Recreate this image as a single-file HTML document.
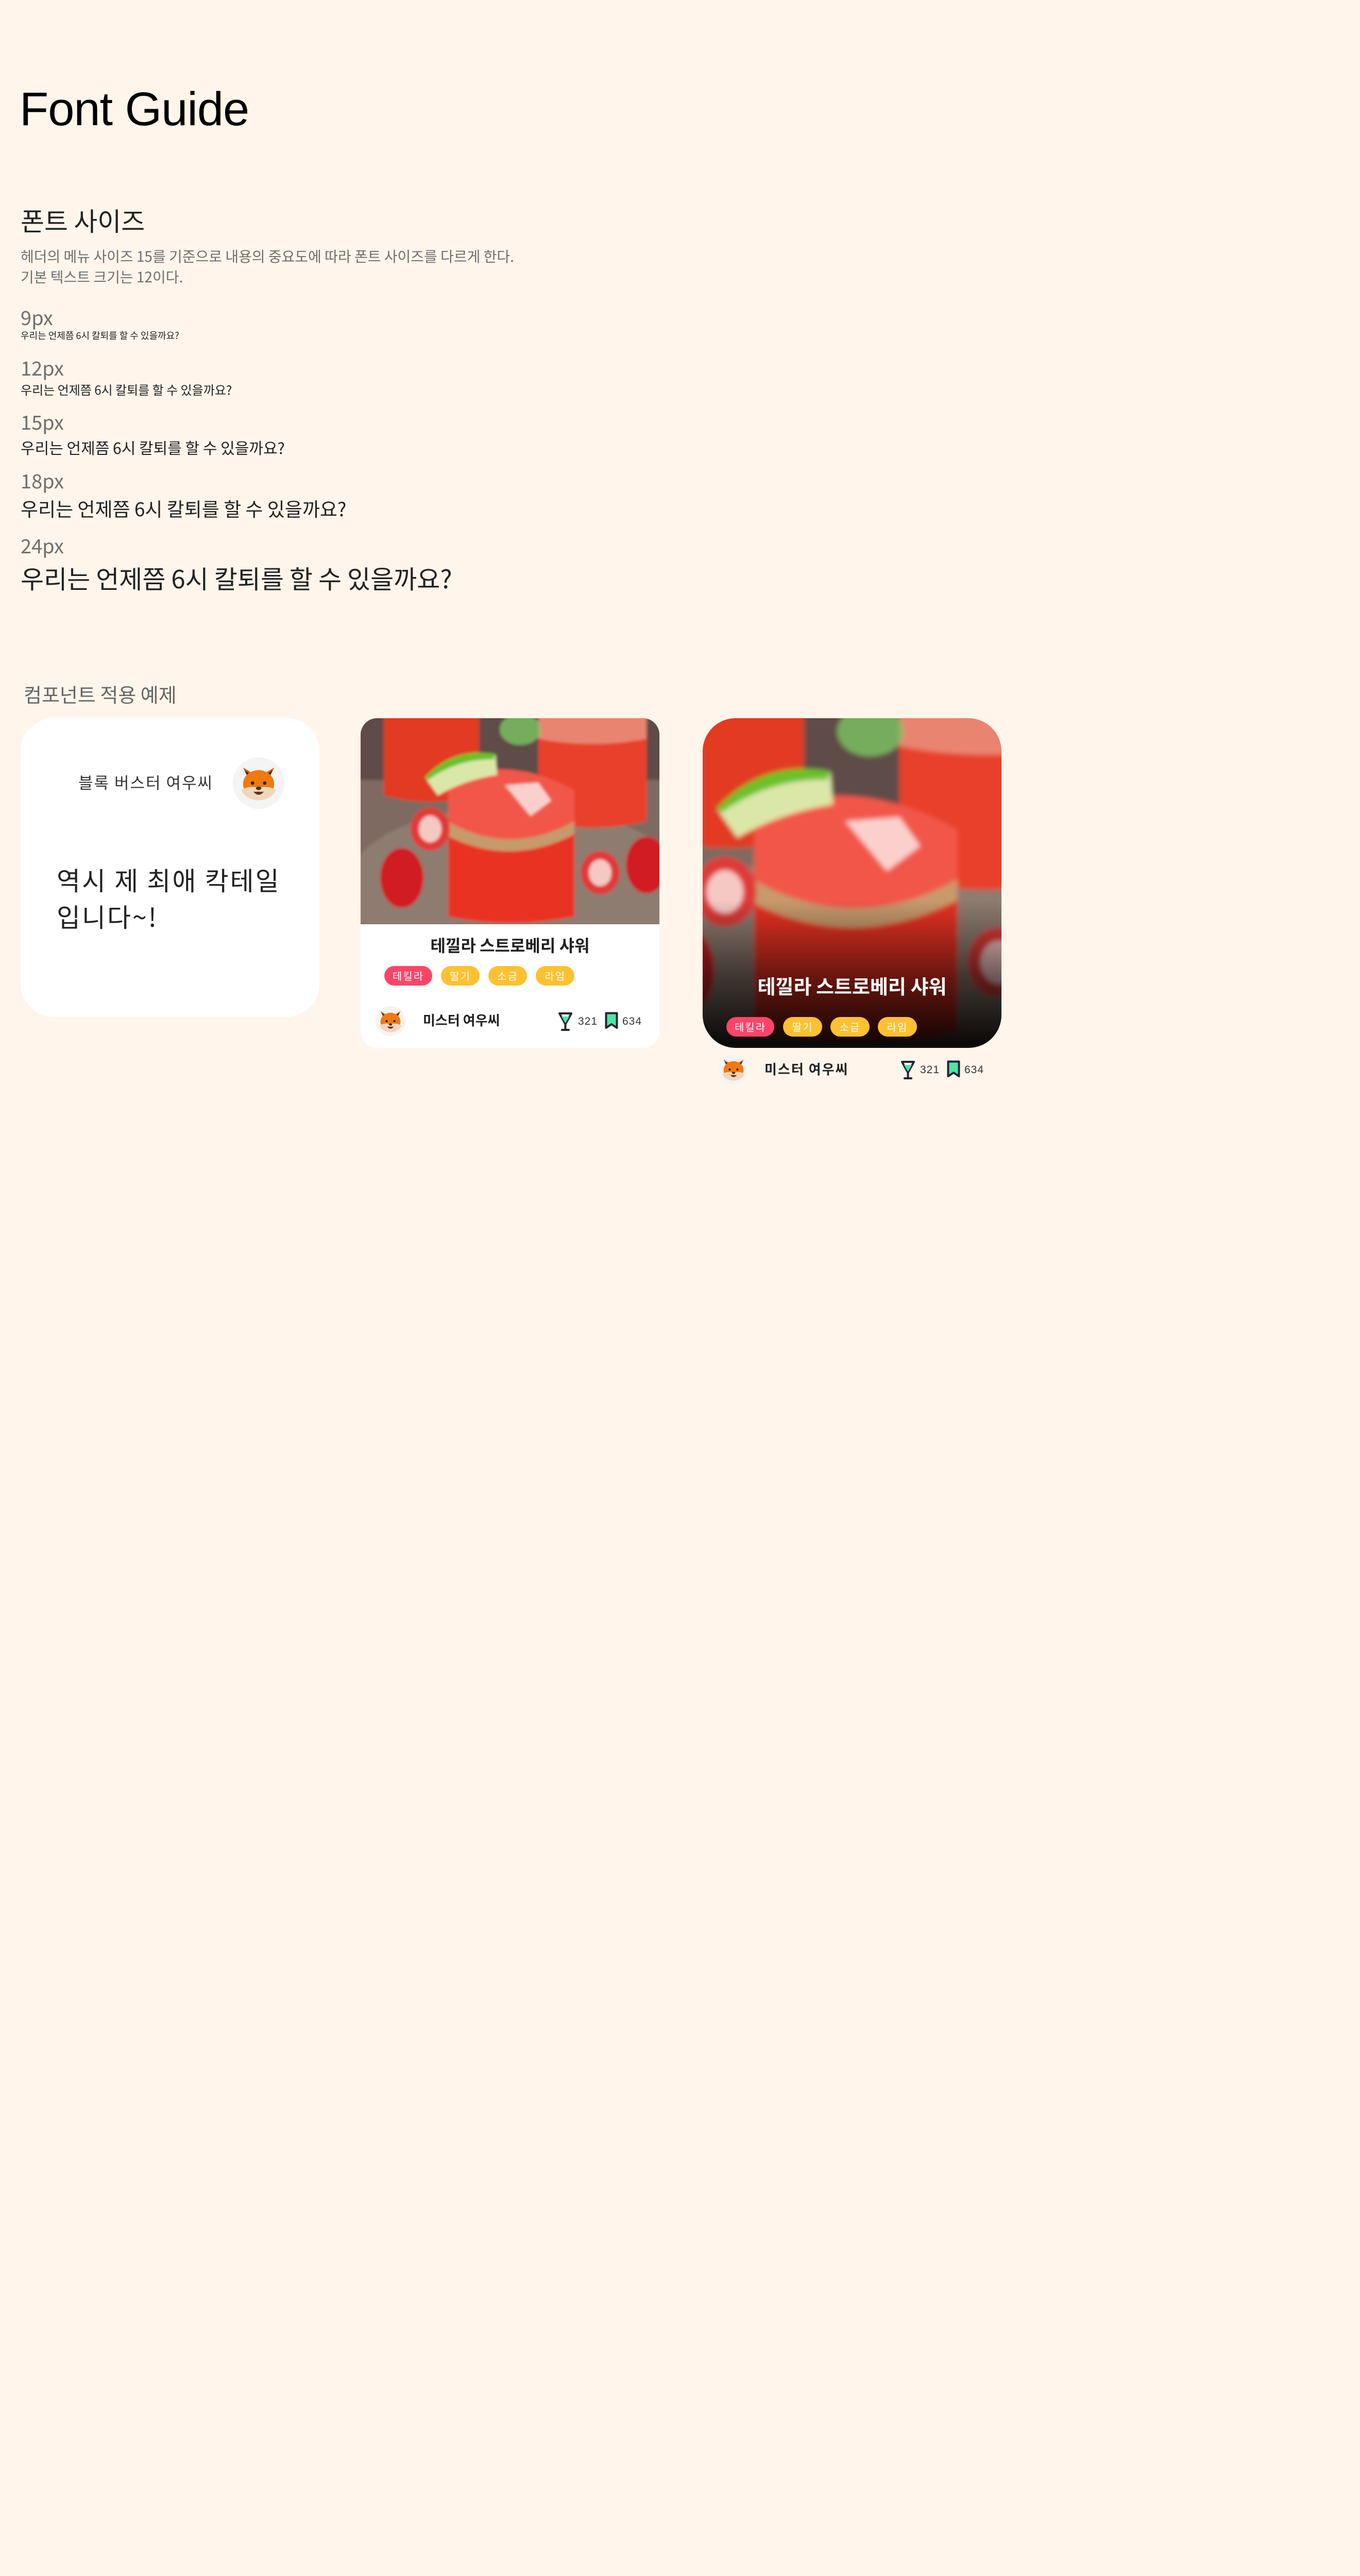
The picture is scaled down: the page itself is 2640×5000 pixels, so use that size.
<!DOCTYPE html>
<html><head><meta charset="utf-8">
<style>
*{margin:0;padding:0;box-sizing:border-box}
html,body{width:2640px;height:5000px;background:#fff5eb;overflow:hidden}
body{position:relative;font-family:"Liberation Sans","Noto Sans CJK KR",sans-serif;color:#222}
.a{position:absolute;white-space:nowrap;line-height:1}
.kr{font-family:"Noto Sans CJK KR","Liberation Sans",sans-serif}
.g{color:#6f6f6f}
.card{position:absolute;overflow:hidden}
.tag{position:absolute;height:38px;border-radius:19px;color:#fff;font-size:20px;line-height:38px;text-align:center;font-family:"Noto Sans CJK KR",sans-serif;letter-spacing:2px}
.p{background:#ff4468}.y{background:#fdc131}
</style></head><body>
<svg width="0" height="0" style="position:absolute">
<defs>
<filter id="bl"><feGaussianBlur stdDeviation="3"/></filter>
<symbol id="fox" viewBox="0 0 100 100">
<path d="M14 14 L40 30 L30 48 Z" fill="#e65c00"/><path d="M86 14 L60 30 L70 48 Z" fill="#e65c00"/>
<path d="M18 20 L34 32 L28 42Z" fill="#3a2010"/><path d="M82 20 L66 32 L72 42Z" fill="#3a2010"/>
<ellipse cx="50" cy="52" rx="36" ry="32" fill="#f07a10"/>
<path d="M10 66 Q30 54 50 62 Q70 54 90 66 Q80 88 50 90 Q20 88 10 66Z" fill="#efd7bb"/>
<circle cx="36" cy="50" r="4" fill="#222"/><circle cx="64" cy="50" r="4" fill="#222"/>
<ellipse cx="50" cy="62" rx="6" ry="4" fill="#333"/>
<path d="M38 70 Q50 84 62 70Z" fill="#6b2a1a"/>
</symbol>
<symbol id="photo" viewBox="0 0 580 400" preserveAspectRatio="xMidYMid slice">
<g filter="url(#bl)">
<rect x="-20" y="-20" width="620" height="440" fill="#7e6a60"/>
<rect x="-20" y="-20" width="620" height="140" fill="#5e4c46"/>
<ellipse cx="300" cy="330" rx="330" ry="160" fill="#8f7b70"/>
<path d="M45 -10 H230 V150 Q138 175 45 150Z" fill="#e23a22"/>
<path d="M345 -10 H555 V200 Q450 225 345 200Z" fill="#e8402a"/>
<path d="M345 -10 H555 V40 Q450 60 345 40Z" fill="#e9b3a0" opacity=".6"/>
<ellipse cx="310" cy="22" rx="40" ry="30" fill="#7cc660" opacity=".8"/>
<path d="M170 150 Q290 135 415 150 V385 Q290 410 170 385Z" fill="#ea3220"/>
<path d="M170 120 Q290 70 415 140 L415 210 Q290 270 170 210Z" fill="#f2564a"/>
<path d="M168 200 Q290 270 415 200 L415 225 Q290 290 168 228Z" fill="#c79a6c"/>
<path d="M280 130 L345 125 L370 160 L330 190Z" fill="#fbd0cc"/>
<path d="M125 115 Q180 55 262 70 L265 110 Q200 120 150 150Z" fill="#dbe7a8"/>
<path d="M125 115 Q180 55 262 70 L258 80 Q190 78 130 120Z" fill="#6cc128"/>
<ellipse cx="80" cy="310" rx="42" ry="58" fill="#d01c22"/>
<ellipse cx="135" cy="215" rx="38" ry="42" fill="#e03a38"/><ellipse cx="135" cy="215" rx="22" ry="26" fill="#f6c8c4"/>
<ellipse cx="465" cy="300" rx="38" ry="42" fill="#e03a38"/><ellipse cx="465" cy="300" rx="22" ry="26" fill="#f6c8c4"/>
<ellipse cx="555" cy="285" rx="40" ry="55" fill="#d01c22"/>
</g>
</symbol>
<symbol id="glass" viewBox="0 0 29 38"><path d="M3 3 H26 L14.5 24 Z" fill="#fff" stroke="#222433" stroke-width="4" stroke-linejoin="round"/><path d="M7 9 H22 L14.5 22Z" fill="#4de6a6"/><path d="M14.5 24 V35 M8 35 H21" stroke="#222433" stroke-width="4" stroke-linecap="round"/></symbol>
<symbol id="book" viewBox="0 0 26 34"><path d="M2.5 2.5 H23.5 V31 L13 24 L2.5 31Z" fill="#4de6a6" stroke="#222433" stroke-width="4" stroke-linejoin="round"/></symbol>
</defs></svg>

<div class="a" style="left:38px;top:166px;font-size:92px;color:#000;letter-spacing:-1px">Font Guide</div>

<div class="a kr" style="left:40px;top:402px;font-size:50px;color:#222">폰트 사이즈</div>
<div class="a kr g" style="left:40px;top:477px;font-size:28px;line-height:40px">헤더의 메뉴 사이즈 15를 기준으로 내용의 중요도에 따라 폰트 사이즈를 다르게 한다.<br>기본 텍스트 크기는 12이다.</div>

<div class="a kr g" style="left:40px;top:596px;font-size:38px">9px</div>
<div class="a kr" style="left:40px;top:642px;font-size:18px">우리는 언제쯤 6시 칼퇴를 할 수 있을까요?</div>
<div class="a kr g" style="left:40px;top:694px;font-size:38px">12px</div>
<div class="a kr" style="left:40px;top:744px;font-size:24px">우리는 언제쯤 6시 칼퇴를 할 수 있을까요?</div>
<div class="a kr g" style="left:40px;top:799px;font-size:38px">15px</div>
<div class="a kr" style="left:40px;top:853px;font-size:30px">우리는 언제쯤 6시 칼퇴를 할 수 있을까요?</div>
<div class="a kr g" style="left:40px;top:913px;font-size:38px">18px</div>
<div class="a kr" style="left:40px;top:968px;font-size:37px">우리는 언제쯤 6시 칼퇴를 할 수 있을까요?</div>
<div class="a kr g" style="left:40px;top:1039px;font-size:38px">24px</div>
<div class="a kr" style="left:40px;top:1097px;font-size:49px">우리는 언제쯤 6시 칼퇴를 할 수 있을까요?</div>

<div class="a kr g" style="left:46px;top:1328px;font-size:38px;color:#666">컴포넌트 적용 예제</div>

<!-- card1 -->
<div class="card" style="left:40px;top:1394px;width:580px;height:580px;background:#fff;border-radius:64px">
<div class="a kr" style="left:112px;top:108px;font-size:31px;letter-spacing:2px;color:#333">블록 버스터 여우씨</div>
<div style="position:absolute;left:412px;top:76px;width:100px;height:100px;border-radius:50%;background:#f4f4f4"><svg width="84" height="84" style="position:absolute;left:8px;top:8px"><use href="#fox"/></svg></div>
<div class="a kr" style="left:70px;top:278px;font-size:50px;line-height:71px;letter-spacing:3px;color:#222">역시 제 최애 칵테일<br>입니다~!</div>
</div>

<!-- card2 -->
<div class="card" style="left:700px;top:1394px;width:580px;height:640px;background:#fff;border-radius:32px">
<svg width="580" height="400" style="position:absolute;left:0;top:0"><use href="#photo" width="580" height="400"/></svg>
<div class="a kr" style="left:0;width:580px;text-align:center;top:424px;font-size:32px;font-weight:bold;color:#222">테낄라 스트로베리 샤워</div>
<div class="tag p" style="left:46px;top:481px;width:93px">테킬라</div>
<div class="tag y" style="left:156px;top:481px;width:75px">딸기</div>
<div class="tag y" style="left:248px;top:481px;width:75px">소금</div>
<div class="tag y" style="left:340px;top:481px;width:75px">라임</div>
<div style="position:absolute;left:29px;top:559px;width:58px;height:58px;border-radius:50%;background:#f4f4f4"><svg width="54" height="54" style="position:absolute;left:2px;top:2px"><use href="#fox"/></svg></div>
<div class="a kr" style="left:121px;top:573px;font-size:26px;font-weight:bold;color:#222">미스터 여우씨</div>
<svg width="29" height="38" style="position:absolute;left:383px;top:570px"><use href="#glass"/></svg>
<div class="a" style="left:422px;top:578px;font-size:21px;color:#333;letter-spacing:1px">321</div>
<svg width="26" height="34" style="position:absolute;left:474px;top:570px"><use href="#book"/></svg>
<div class="a" style="left:508px;top:578px;font-size:21px;color:#333;letter-spacing:1px">634</div>
</div>

<!-- card3 -->
<div class="card" style="left:1364px;top:1394px;width:580px;height:640px;border-radius:64px">
<svg width="580" height="640" viewBox="108 6 360 397" preserveAspectRatio="xMidYMid slice" style="position:absolute;left:0;top:0"><use href="#photo" width="580" height="400"/></svg>
<div style="position:absolute;left:0;top:0;width:580px;height:640px;background:linear-gradient(to bottom,rgba(0,0,0,0) 0%,rgba(0,0,0,0) 55%,rgba(0,0,0,.55) 78%,rgba(0,0,0,.95) 100%)"></div>
<div class="a kr" style="left:0;width:580px;text-align:center;top:500px;font-size:38px;font-weight:bold;color:#fff">테낄라 스트로베리 샤워</div>
<div class="tag p" style="left:46px;top:580px;width:93px">테킬라</div>
<div class="tag y" style="left:156px;top:580px;width:76px">딸기</div>
<div class="tag y" style="left:248px;top:580px;width:76px">소금</div>
<div class="tag y" style="left:340px;top:580px;width:76px">라임</div>
</div>
<div style="position:absolute;left:1395px;top:2047px;width:58px;height:58px;border-radius:50%;background:#f4f4f4"><svg width="54" height="54" style="position:absolute;left:2px;top:2px"><use href="#fox"/></svg></div>
<div class="a kr" style="left:1484px;top:2062px;font-size:26px;font-weight:bold;color:#222;letter-spacing:2px">미스터 여우씨</div>
<svg width="29" height="38" style="position:absolute;left:1748px;top:2058px"><use href="#glass"/></svg>
<div class="a" style="left:1786px;top:2066px;font-size:21px;color:#333;letter-spacing:1px">321</div>
<svg width="26" height="34" style="position:absolute;left:1838px;top:2058px"><use href="#book"/></svg>
<div class="a" style="left:1872px;top:2066px;font-size:21px;color:#333;letter-spacing:1px">634</div>
</body></html>
